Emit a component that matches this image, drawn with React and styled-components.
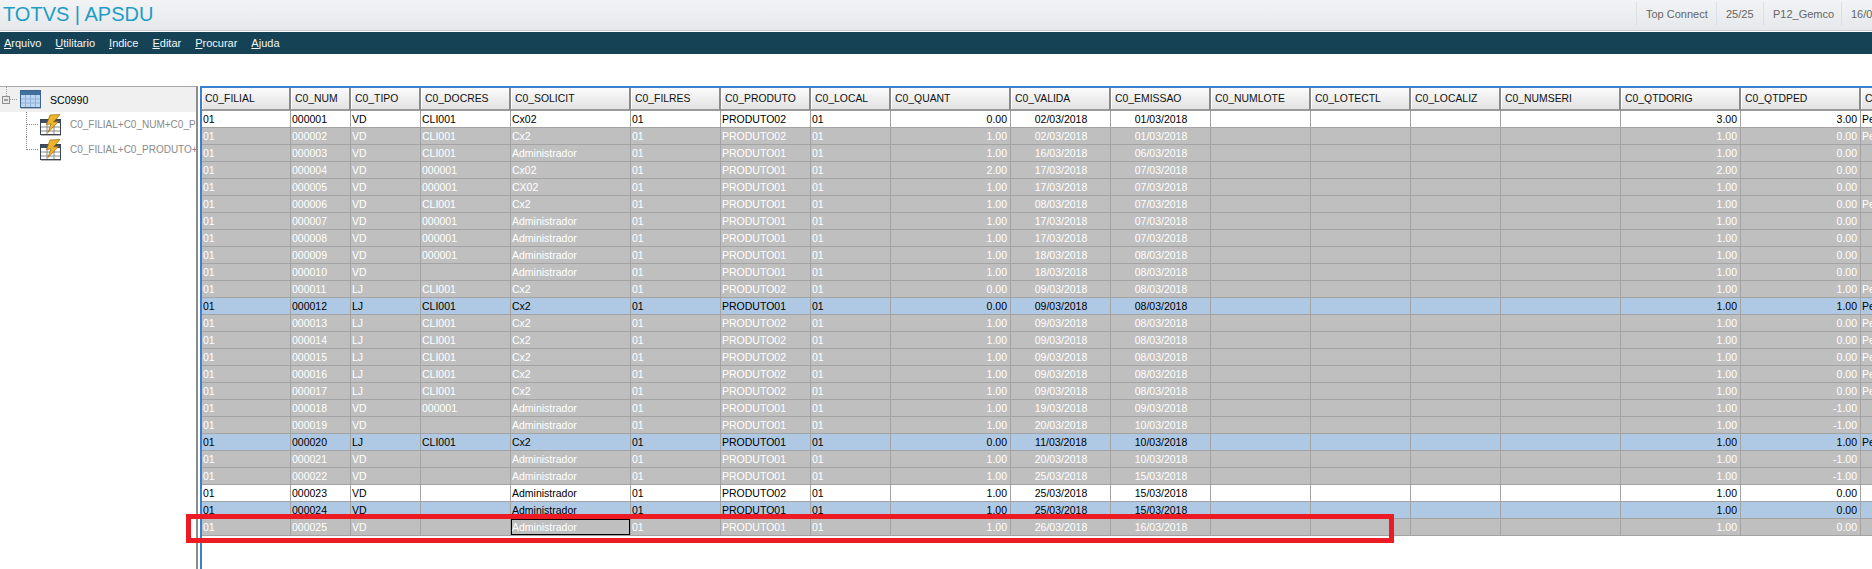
import React from 'react';
import styled, { createGlobalStyle } from 'styled-components';

const GlobalStyle = createGlobalStyle`
  html, body {
    margin: 0;
    padding: 0;
    background: #fff;
    overflow: hidden;
  }
  body {
    font-family: "Liberation Sans", Arial, sans-serif;
  }
`;

const Page = styled.div`
  position: relative;
  width: 1872px;
  height: 569px;
  overflow: hidden;
  display: flex;
  flex-direction: column;
`;

const TopBar = styled.header`
  height: 31px;
  box-sizing: border-box;
  display: flex;
  align-items: center;
  justify-content: space-between;
  padding: 0 0 2px 3px;
  background: linear-gradient(#f1f3f5, #e6e9ec);
  border-bottom: 1px solid #c9cccf;
`;

const Title = styled.div`
  font-size: 20px;
  color: #1f9dc6;
`;

const StatusList = styled.div`
  display: flex;
  height: 24px;
`;

const Status = styled.div`
  box-sizing: border-box;
  width: ${(p) => p.$w}px;
  padding-left: 9px;
  border-left: 1px solid #dcdfe2;
  font-size: 11px;
  line-height: 24px;
  color: #666;
  white-space: nowrap;
  overflow: hidden;
`;

const MenuBar = styled.nav`
  margin-top: 1px;
  height: 22px;
  display: flex;
  align-items: center;
  gap: 14px;
  padding-left: 4px;
  background: #154355;
`;

const MenuItem = styled.span`
  font-size: 11px;
  color: #f2f5f6;
  &::first-letter {
    text-decoration: underline;
  }
`;

const Workspace = styled.div`
  flex: 1;
  display: flex;
  gap: 2px;
  margin-top: 32px;
  min-height: 0;
`;

const TreePanel = styled.aside`
  width: 198px;
  box-sizing: border-box;
  border-top: 1px solid #a8a8a8;
  border-right: 2px solid #8c8c8c;
  overflow: hidden;
`;

const TreeRow = styled.div`
  height: 25px;
  display: flex;
  align-items: center;
  background: ${(p) => (p.$root ? '#f0f0f0' : '#fff')};
`;

const TreeGlyph = styled.svg`
  flex: none;
  display: block;
`;

const TreeLabel = styled.span`
  flex: none;
  font-size: ${(p) => (p.$root ? '10.6px' : '10px')};
  white-space: nowrap;
  margin-left: 9px;
  color: ${(p) => (p.$root ? '#000' : '#8a8a8a')};
`;

const TablePane = styled.section`
  flex: 1;
  min-width: 0;
  border-top: 2px solid #3b80d2;
  border-left: 2px solid #3b80d2;
  overflow: hidden;
`;

const Grid = styled.table`
  table-layout: fixed;
  border-collapse: separate;
  border-spacing: 0;
  width: ${(p) => p.$w}px;
`;

const HeadCell = styled.th`
  box-sizing: border-box;
  height: 23px;
  padding: 0 0 0 4px;
  font-weight: normal;
  font-size: 10.4px;
  text-align: left;
  color: #111;
  white-space: nowrap;
  overflow: hidden;
  background: linear-gradient(#fbfbfb, #e2e2e2);
  border-right: 2px solid #8a8a8a;
  border-bottom: 2px solid #9a9a9a;
  box-shadow: inset 1px 0 0 #fff;
  &:first-child {
    padding-left: 3px;
  }
`;

const tones = {
  white: { bg: '#fff', fg: '#000' },
  gray: { bg: '#bfbfbf', fg: '#fff' },
  blue: { bg: '#afc9e5', fg: '#000' },
};

const Cell = styled.td`
  box-sizing: border-box;
  height: 17px;
  padding: ${(p) => (p.$align === 'right' ? '0 3px 0 0' : '0 0 0 1px')};
  font-size: 10.5px;
  line-height: 16px;
  white-space: nowrap;
  overflow: hidden;
  text-align: ${(p) => p.$align || 'left'};
  background: ${(p) => tones[p.$tone].bg};
  color: ${(p) => tones[p.$tone].fg};
  border-right: 1px solid #a3a3a3;
  border-bottom: 1px solid #a3a3a3;
  ${(p) => p.$focused && 'box-shadow: inset 0 0 0 1px #000;'}
`;

// the red mark drawn over the screenshot
const Highlight = styled.div`
  position: absolute;
  left: 186px;
  top: 514px;
  width: 1208px;
  height: 29px;
  box-sizing: border-box;
  border: 5px solid #ed1c24;
  pointer-events: none;
`;

const columns = [
  ['C0_FILIAL', 89],
  ['C0_NUM', 60],
  ['C0_TIPO', 70],
  ['C0_DOCRES', 90],
  ['C0_SOLICIT', 120],
  ['C0_FILRES', 90],
  ['C0_PRODUTO', 90],
  ['C0_LOCAL', 80],
  ['C0_QUANT', 120, 'right'],
  ['C0_VALIDA', 100, 'center'],
  ['C0_EMISSAO', 100, 'center'],
  ['C0_NUMLOTE', 100],
  ['C0_LOTECTL', 100],
  ['C0_LOCALIZ', 90],
  ['C0_NUMSERI', 120],
  ['C0_QTDORIG', 120, 'right'],
  ['C0_QTDPED', 120, 'right'],
  ['C', 100],
];

const ADM = 'Administrador';

// tipo, docres, solicit, produto, quant, valida, emissao, qtdorig, qtdped, last, tone
const rows = [
  ['VD', 'CLI001', 'Cx02', '02', '0.00', '02', '01', '3.00', '3.00', 'Pe', 'white'],
  ['VD', 'CLI001', 'Cx2', '02', '1.00', '02', '01', '1.00', '0.00', 'Pe', 'gray'],
  ['VD', 'CLI001', ADM, '01', '1.00', '16', '06', '1.00', '0.00', '', 'gray'],
  ['VD', '000001', 'Cx02', '01', '2.00', '17', '07', '2.00', '0.00', '', 'gray'],
  ['VD', '000001', 'CX02', '01', '1.00', '17', '07', '1.00', '0.00', '', 'gray'],
  ['VD', 'CLI001', 'Cx2', '01', '1.00', '08', '07', '1.00', '0.00', 'Pe', 'gray'],
  ['VD', '000001', ADM, '01', '1.00', '17', '07', '1.00', '0.00', '', 'gray'],
  ['VD', '000001', ADM, '01', '1.00', '17', '07', '1.00', '0.00', '', 'gray'],
  ['VD', '000001', ADM, '01', '1.00', '18', '08', '1.00', '0.00', '', 'gray'],
  ['VD', '', ADM, '01', '1.00', '18', '08', '1.00', '0.00', '', 'gray'],
  ['LJ', 'CLI001', 'Cx2', '02', '0.00', '09', '08', '1.00', '1.00', 'Pe', 'gray'],
  ['LJ', 'CLI001', 'Cx2', '01', '0.00', '09', '08', '1.00', '1.00', 'Pe', 'blue'],
  ['LJ', 'CLI001', 'Cx2', '02', '1.00', '09', '08', '1.00', '0.00', 'Pe', 'gray'],
  ['LJ', 'CLI001', 'Cx2', '02', '1.00', '09', '08', '1.00', '0.00', 'Pe', 'gray'],
  ['LJ', 'CLI001', 'Cx2', '02', '1.00', '09', '08', '1.00', '0.00', 'Pe', 'gray'],
  ['LJ', 'CLI001', 'Cx2', '02', '1.00', '09', '08', '1.00', '0.00', 'Pe', 'gray'],
  ['LJ', 'CLI001', 'Cx2', '02', '1.00', '09', '08', '1.00', '0.00', 'Pe', 'gray'],
  ['VD', '000001', ADM, '01', '1.00', '19', '09', '1.00', '-1.00', '', 'gray'],
  ['VD', '', ADM, '01', '1.00', '20', '10', '1.00', '-1.00', '', 'gray'],
  ['LJ', 'CLI001', 'Cx2', '01', '0.00', '11', '10', '1.00', '1.00', 'Pe', 'blue'],
  ['VD', '', ADM, '01', '1.00', '20', '10', '1.00', '-1.00', '', 'gray'],
  ['VD', '', ADM, '01', '1.00', '25', '15', '1.00', '-1.00', '', 'gray'],
  ['VD', '', ADM, '02', '1.00', '25', '15', '1.00', '0.00', '', 'white'],
  ['VD', '', ADM, '01', '1.00', '25', '15', '1.00', '0.00', '', 'blue'],
  ['VD', '', ADM, '01', '1.00', '26', '16', '1.00', '0.00', '', 'gray'],
];

function rowCells(r, i) {
  const [tipo, docres, solicit, prod, quant, valida, emissao, orig, ped, last] = r;
  return [
    '01',
    String(i + 1).padStart(6, '0'),
    tipo,
    docres,
    solicit,
    '01',
    'PRODUTO' + prod,
    '01',
    quant,
    valida + '/03/2018',
    emissao + '/03/2018',
    '',
    '',
    '',
    '',
    orig,
    ped,
    last,
  ];
}

function RootConnector() {
  return (
    <TreeGlyph width="20" height="25" viewBox="0 0 20 25">
      <path d="M6.5 0V9M10 12.5H17" stroke="#999" strokeDasharray="1 1" fill="none" />
      <rect x="2.5" y="9.5" width="7" height="7" fill="#e8e8e8" stroke="#8f8f8f" />
      <path d="M4 13H8" stroke="#555" />
    </TreeGlyph>
  );
}

function NodeConnector({ last }) {
  return (
    <TreeGlyph width="40" height="25" viewBox="0 0 40 25">
      <path
        d={last ? 'M26.5 0V13M27 12.5H38' : 'M26.5 0V25M27 12.5H38'}
        stroke="#8a8a8a"
        strokeDasharray="1 1"
        fill="none"
      />
    </TreeGlyph>
  );
}

function TableIcon() {
  return (
    <TreeGlyph width="21" height="19" viewBox="0 0 21 19">
      <rect x="0.5" y="0.5" width="20" height="17" fill="#bcd6f1" stroke="#3b638c" />
      <rect x="1" y="1" width="19" height="4" fill="#3f6f9f" />
      <path d="M1 9H20M1 13H20M5.5 5V17M10.5 5V17M15.5 5V17" stroke="#8fb2d6" fill="none" />
      <path d="M1 18.5H21" stroke="#b9b9b9" />
    </TreeGlyph>
  );
}

function IndexIcon() {
  return (
    <TreeGlyph width="21" height="22" viewBox="0 0 21 22">
      <rect x="0.5" y="5.5" width="20" height="15" fill="#fff" stroke="#3c4650" />
      <rect x="1" y="6" width="19" height="3" fill="#3c4f66" />
      <path d="M1 13H20M1 17H20M7 9V20M14 9V20" stroke="#8b8b8b" fill="none" />
      <path d="M20 0.5L10 1L6.5 10.5L11 10L8 18.5L18.5 7.5L13.5 8Z" fill="#f0b429" stroke="#9a6a12" strokeWidth="0.7" />
      <path d="M1 21.5H21" stroke="#b5b5b5" />
    </TreeGlyph>
  );
}

const totalWidth = columns.reduce((sum, c) => sum + c[1], 0);

export default function App() {
  return (
    <Page>
      <GlobalStyle />
      <TopBar>
        <Title>TOTVS | APSDU</Title>
        <StatusList>
          <Status $w={80}>Top Connect</Status>
          <Status $w={47}>25/25</Status>
          <Status $w={78}>P12_Gemco</Status>
          <Status $w={31}>16/03/2018</Status>
        </StatusList>
      </TopBar>
      <MenuBar>
        {['Arquivo', 'Utilitario', 'Indice', 'Editar', 'Procurar', 'Ajuda'].map((m) => (
          <MenuItem key={m}>{m}</MenuItem>
        ))}
      </MenuBar>
      <Workspace>
        <TreePanel>
          <TreeRow $root>
            <RootConnector />
            <TableIcon />
            <TreeLabel $root>SC0990</TreeLabel>
          </TreeRow>
          <TreeRow>
            <NodeConnector />
            <IndexIcon />
            <TreeLabel>C0_FILIAL+C0_NUM+C0_P</TreeLabel>
          </TreeRow>
          <TreeRow>
            <NodeConnector last />
            <IndexIcon />
            <TreeLabel>C0_FILIAL+C0_PRODUTO+</TreeLabel>
          </TreeRow>
        </TreePanel>
        <TablePane>
          <Grid $w={totalWidth}>
            <colgroup>
              {columns.map(([name, w]) => (
                <col key={name} width={w} />
              ))}
            </colgroup>
            <thead>
              <tr>
                {columns.map(([name]) => (
                  <HeadCell key={name}>{name}</HeadCell>
                ))}
              </tr>
            </thead>
            <tbody>
              {rows.map((r, i) => (
                <tr key={i}>
                  {rowCells(r, i).map((value, c) => (
                    <Cell
                      key={c}
                      $tone={r[10]}
                      $align={columns[c][2]}
                      $focused={i === 24 && c === 4}
                    >
                      {value}
                    </Cell>
                  ))}
                </tr>
              ))}
            </tbody>
          </Grid>
        </TablePane>
      </Workspace>
      <Highlight />
    </Page>
  );
}
